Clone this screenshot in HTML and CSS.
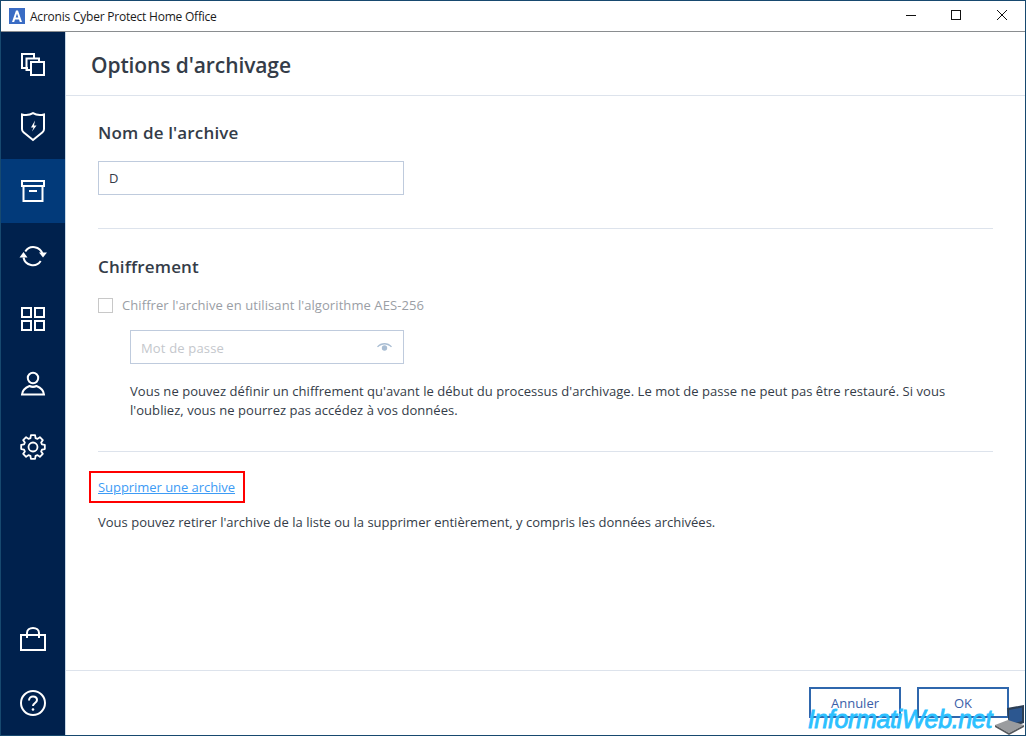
FILE: index.html
```html
<!DOCTYPE html>
<html lang="fr">
<head>
<meta charset="utf-8">
<title>Acronis Cyber Protect Home Office</title>
<link rel="stylesheet" href="styles.css">
</head>
<body>
<div class="window">
  <header class="titlebar">
    <svg class="app-logo" width="16" height="16" viewBox="0 0 16 16"><rect width="16" height="16" fill="#3a6cc4"/><path d="M3 14 7 2.500h2L13 14h-2.200l-.8-2.400H6L5.200 14zM6.700 9.500h2.600L8 5.500z" fill="#fff"/></svg>
    <span class="app-title">Acronis Cyber Protect Home Office</span>
    <div class="win-controls">
      <svg width="46" height="30" viewBox="0 0 46 30"><path d="M19 14.500h10" stroke="#111" fill="none"/></svg>
      <svg width="46" height="30" viewBox="0 0 46 30"><rect x="18.500" y="9.500" width="9" height="9" stroke="#111" fill="none"/></svg>
      <svg width="46" height="30" viewBox="0 0 46 30"><path d="M18 9l10 10M28 9 18 19" stroke="#111" fill="none"/></svg>
    </div>
  </header>
  <div class="body">
    <nav class="sidebar">
      <div class="nav-top">
        <div class="nav-item"><svg width="26" height="26" viewBox="0 0 26 26" fill="none" stroke="#fff" stroke-width="2"><path d="M8 17H2V3h12v4"/><path d="M13 19H6.500V7.500H19V11"/><rect x="11" y="11" width="13" height="13" fill="#00214d"/></svg></div>
        <div class="nav-item"><svg width="26" height="30" viewBox="0 0 26 30" fill="none" stroke="#fff" stroke-width="2"><path d="M2 2.500C6 3.500 10 3 13 1.200 16 3 20 3.500 24 2.500V17c0 1.500-.5 2.500-1.500 3.300L13 28 3.500 20.300C2.500 19.500 2 18.500 2 17z"/><path d="M15 8.500 11 15.500h2.500L12 19.500l4.500-6H14z" fill="#fff" stroke="none"/></svg></div>
        <div class="nav-item active"><svg width="24" height="22" viewBox="0 0 24 22" fill="none" stroke="#fff" stroke-width="2"><path d="M1 1h22v5H1zM2.500 6v15h19V6M8 11h8"/></svg></div>
        <div class="nav-item"><svg width="28" height="24" viewBox="0 0 28 24" fill="none" stroke="#fff" stroke-width="2"><path d="M6.300 8.500A9.500 9.500 0 0 1 23.500 11"/><path d="M21.700 18A9.500 9.500 0 0 1 4.500 14.500"/><path d="M20 9.500h8L24 14.500zM.500 14.500h8L4.500 9z" fill="#fff" stroke="none"/></svg></div>
        <div class="nav-item"><svg width="26" height="26" viewBox="0 0 26 26" fill="none" stroke="#fff" stroke-width="2"><rect x="2" y="2" width="9" height="9"/><rect x="15" y="2" width="9" height="9"/><rect x="2" y="15" width="9" height="9"/><rect x="15" y="15" width="9" height="9"/></svg></div>
        <div class="nav-item"><svg width="26" height="26" viewBox="0 0 26 26" fill="none" stroke="#fff" stroke-width="2"><circle cx="13" cy="8" r="5.200"/><path d="M2 24.500c.3-4.500 4-7 7.500-8.500 2 1 5 1 7 0 3.500 1.500 7.200 4 7.500 8.500z"/></svg></div>
        <div class="nav-item"><svg width="26" height="26" viewBox="-13 -13 26 26" fill="none" stroke="#fff" stroke-width="1.800" stroke-linejoin="round"><circle r="4.500"/><path d="M-2.560-8.940-2.080-11.820H2.080L2.560-8.940 4.510-8.130 6.890-9.830 9.830-6.890 8.130-4.510 8.940-2.560 11.820-2.080V2.080L8.940 2.560 8.130 4.510 9.830 6.890 6.890 9.830 4.510 8.130 2.560 8.940 2.080 11.820H-2.080L-2.560 8.940-4.510 8.130-6.890 9.830-9.830 6.890-8.130 4.510-8.940 2.560-11.820 2.080V-2.080L-8.940-2.560-8.130-4.510-9.830-6.890-6.890-9.830-4.510-8.130z"/></svg></div>
      </div>
      <div class="nav-bottom">
        <div class="nav-item"><svg width="26" height="26" viewBox="0 0 26 26" fill="none" stroke="#fff" stroke-width="2"><rect x="1" y="9" width="24" height="15"/><path d="M7 12V7c0-3 2.500-5 6-5s6 2 6 5v5"/></svg></div>
        <div class="nav-item"><svg width="26" height="26" viewBox="0 0 26 26" fill="none" stroke="#fff" stroke-width="2"><circle cx="13" cy="13" r="12"/><path d="M9 10.500C9 8 11 6.500 13 6.500c2.500 0 4 1.500 4 3.500 0 3-4 3-4 6"/><circle cx="13" cy="19.500" r="1.300" fill="#fff" stroke="none"/></svg></div>
      </div>
    </nav>
    <main class="main">
      <h1 class="page-title">Options d'archivage</h1>
      <div class="content">
        <section class="section name-section">
          <h2 class="section-title">Nom de l'archive</h2>
          <input class="field name-field" type="text" value="D">
        </section>
        <section class="section crypt-section">
          <h2 class="section-title">Chiffrement</h2>
          <label class="check-row"><span class="checkbox"></span><span>Chiffrer l'archive en utilisant l'algorithme AES-256</span></label>
          <div class="indent">
            <div class="field pass-field">
              <span class="pass-text">Mot de passe</span>
              <svg width="15" height="10" viewBox="0 0 15 10"><path d="M0 4.500C2 2 4.700 1 7.500 1S13 2 15 4.500l-1 .8C12 3.300 9.500 2.500 7.500 2.500S3 3.300 1 5.300z" fill="#a9bdd3"/><circle cx="7.500" cy="6" r="2.700" fill="#a9bdd3"/></svg>
            </div>
            <p class="note">Vous ne pouvez définir un chiffrement qu'avant le début du processus d'archivage. Le mot de passe ne peut pas être restauré. Si vous l'oubliez, vous ne pourrez pas accédez à vos données.</p>
          </div>
        </section>
        <section class="delete-section">
          <div class="link-row"><a class="link highlighted" href="#">Supprimer une archive</a></div>
          <p class="note">Vous pouvez retirer l'archive de la liste ou la supprimer entièrement, y compris les données archivées.</p>
        </section>
      </div>
      <footer class="footer">
        <button class="btn">Annuler</button>
        <button class="btn">OK</button>
      </footer>
    </main>
  </div>
  <div class="watermark">
    <span class="wm-text">InformatiWeb.net</span>
    <svg class="wm-laptop" width="31" height="30" viewBox="0 0 31 30"><path d="M13 3 30 0v18l-15 5z" fill="#2c3f55"/><path d="M15 5 28 2.500V16l-13 4z" fill="#2c5790"/><path d="M1 20 14 15 30 20 15 28z" fill="#9a9c9f"/><path d="M1 20 15 28 30 20v2L15 30 1 22z" fill="#55585c"/></svg>
  </div>
</div>
</body>
</html>
```

FILE: styles.css
```css
* { box-sizing: border-box; }
html, body { margin: 0; padding: 0; }
body { width: 1026px; height: 736px; overflow: hidden; background: #fff; font-family: "Open Sans", "Noto Sans", sans-serif; color: #343c48; }
.window { position: relative; width: 1026px; height: 736px; border: 1px solid #17496f; display: flex; flex-direction: column; }
.titlebar { height: 31px; flex: none; display: flex; align-items: center; padding-left: 8px; border-bottom: 1px solid #8a8d90; background: #fff; }
.app-logo { flex: none; margin-top: -1px; }
.app-title { margin-left: 5px; font-size: 12px; color: #1a1a1a; letter-spacing: -0.22px; }
.win-controls { margin-left: auto; display: flex; }
.win-controls svg { display: block; }
.body { flex: 1; display: flex; min-height: 0; }
.sidebar { width: 65px; flex: none; background: #00214d; display: flex; flex-direction: column; justify-content: space-between; border-right: 1px solid #c8d8e6; }
.nav-item { height: 64px; display: flex; align-items: center; justify-content: center; }
.nav-top .nav-item:first-child { height: 63px; }
.nav-item.active { background: #023a7a; }
.main { flex: 1; display: flex; flex-direction: column; min-width: 0; }
.page-title { margin: 0; height: 64px; flex: none; padding: 2px 0 0 25px; display: flex; align-items: center; font-size: 21px; font-weight: 600; letter-spacing: -0.1px; color: #343c48; border-bottom: 1px solid #dde3ec; }
.content { flex: 1; padding: 0 32px; }
.section { border-bottom: 1px solid #dde3ec; }
.name-section { height: 133px; padding-top: 23px; }
.section-title { margin: 0; font-size: 17px; line-height: 28px; font-weight: 600; letter-spacing: 0.15px; color: #343c48; }
.field { display: flex; align-items: center; border: 1px solid #bfcbdd; background: #fff; height: 34px; font: inherit; font-size: 13px; }
.name-field { width: 306px; margin-top: 14px; padding: 0 10px; color: #343c48; outline: none; }
.crypt-section { height: 223px; padding-top: 24px; }
.check-row { display: flex; align-items: center; gap: 9px; margin-top: 14px; height: 20px; font-size: 13px; letter-spacing: 0.08px; color: #9a9ea5; }
.checkbox { width: 15px; height: 15px; border: 1px solid #c8c8c8; flex: none; }
.indent { padding-left: 32px; margin-top: 15px; }
.pass-field { width: 274px; justify-content: space-between; padding: 0 11px 0 10px; color: #c4c7cc; }
.pass-text { letter-spacing: 0.17px; padding-top: 2px; }
.note { margin: 0; font-size: 13px; line-height: 20px; letter-spacing: 0.01px; color: #343c48; }
.indent .note { margin-top: 18px; line-height: 19px; letter-spacing: 0.05px; max-width: 840px; }
.delete-section { padding-top: 25px; }
.link-row { height: 20px; display: flex; align-items: center; margin-bottom: 15px; }
.link { font-size: 13px; color: #3d9bf5; text-decoration: underline; letter-spacing: -0.05px; }
.highlighted { outline: 2px solid #f00; padding: 5px 8px 5px 7px; margin-left: -7px; line-height: 18px; }
.footer { height: 65px; flex: none; border-top: 1px solid #dde3ec; display: flex; justify-content: flex-end; gap: 16px; padding: 16px 16px 0 0; }
.btn { width: 92px; height: 31px; background: #fff; border: 2px solid #2f67ad; color: #3a5ea8; font: inherit; font-size: 13px; font-weight: 500; padding: 1px 0 0; }
.watermark { position: absolute; right: 0; bottom: 0; }
.wm-text { font-family: "Liberation Sans", sans-serif; font-style: italic; font-size: 25px; line-height: 1; letter-spacing: -0.35px; color: #2bc0ff; -webkit-text-stroke: 0.8px #2bc0ff; position: absolute; right: 33px; bottom: 3px; white-space: nowrap; }
.wm-laptop { display: block; }
```
